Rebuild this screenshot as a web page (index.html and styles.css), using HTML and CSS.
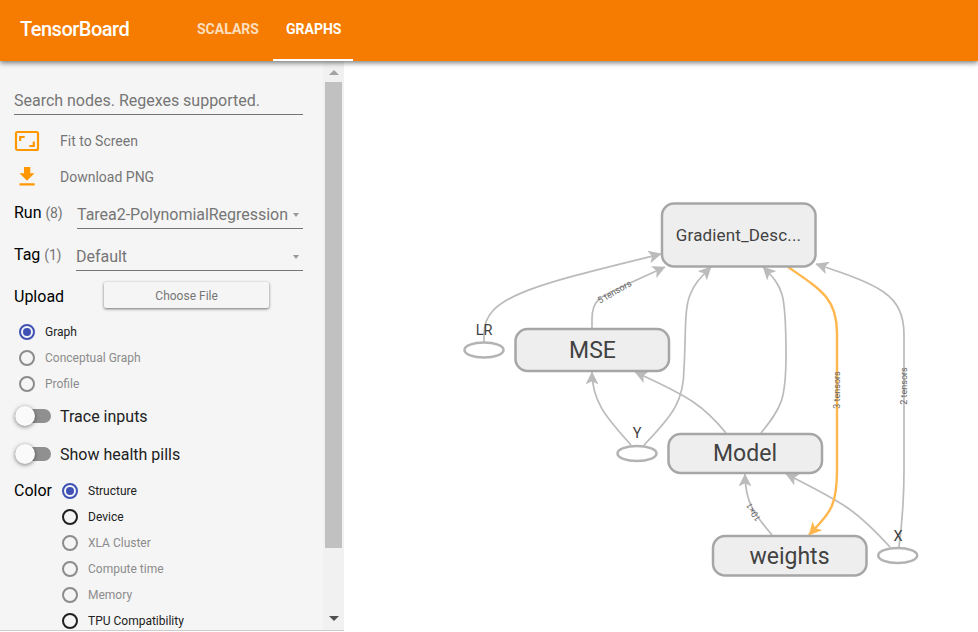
FILE: index.html
```html
<!DOCTYPE html>
<html lang="en">
<head>
<meta charset="utf-8">
<title>TensorBoard</title>
<link rel="stylesheet" href="styles.css">
</head>
<body>
<header class="toolbar">
  <div class="brand">TensorBoard</div>
  <nav class="tabs">
    <a class="tab">SCALARS</a>
    <a class="tab active">GRAPHS</a>
  </nav>
</header>
<main class="main">
  <aside class="side">
    <div class="controls">
      <div class="search">Search nodes. Regexes supported.</div>
      <div class="action">
        <svg class="icon" viewBox="0 0 26 26"><rect x="2" y="4" width="22" height="18" rx="1.500" fill="none" stroke="#ff9800" stroke-width="2.200"/><path d="M6.200 13V9h4.500M19.800 13.500v4.500h-4.500" fill="none" stroke="#ff9800" stroke-width="2.200"/></svg>
        <span>Fit to Screen</span>
      </div>
      <div class="action">
        <svg class="icon" viewBox="0 0 26 26"><path d="M10 3h6.300v6.200h4.200L13 16.700 5.500 9.200H10zM5.500 19.200h15.200v2.200H5.500z" fill="#ff9800"/></svg>
        <span>Download PNG</span>
      </div>
      <div class="row">
        <span class="label">Run <small>(8)</small></span>
        <div class="select run"><span>Tarea2-PolynomialRegression</span><i class="caret"></i></div>
      </div>
      <div class="row">
        <span class="label">Tag <small>(1)</small></span>
        <div class="select tag"><span>Default</span><i class="caret"></i></div>
      </div>
      <div class="upload"><span>Upload</span><button class="choose">Choose File</button></div>
      <div class="radios">
        <div class="radio checked"><i></i>Graph</div>
        <div class="radio disabled"><i></i>Conceptual Graph</div>
        <div class="radio disabled"><i></i>Profile</div>
      </div>
      <div class="toggle"><i class="switch"></i>Trace inputs</div>
      <div class="toggle"><i class="switch"></i>Show health pills</div>
      <div class="color">
        <span class="color-label">Color</span>
        <div>
          <div class="radio checked"><i></i>Structure</div>
          <div class="radio"><i></i>Device</div>
          <div class="radio disabled"><i></i>XLA Cluster</div>
          <div class="radio disabled"><i></i>Compute time</div>
          <div class="radio disabled"><i></i>Memory</div>
          <div class="radio"><i></i>TPU Compatibility</div>
        </div>
      </div>
    </div>
    <div class="scrollbar">
      <i class="up"></i>
      <div class="thumb"></div>
      <i class="down"></i>
    </div>
  </aside>
  <section class="canvas">
    <svg class="graph" viewBox="344 61 634 571">
      <defs>
        <marker id="arrow" viewBox="0 0 12 12" refX="11.500" refY="6" markerWidth="13" markerHeight="13" markerUnits="userSpaceOnUse" orient="auto"><path d="M0 0L12 6 0 12 3 6z" fill="#bbb"/></marker>
        <marker id="arrow-ref" viewBox="0 0 12 12" refX="11.500" refY="6" markerWidth="13" markerHeight="13" markerUnits="userSpaceOnUse" orient="auto"><path d="M0 0L12 6 0 12 3 6z" fill="#ffb74d"/></marker>
      </defs>
      <g class="edges">
        <path d="M484 342V334C484 297 530 286 661 254"/>
        <path d="M592 329V319C592 297 603 296 630 283L665 267"/>
        <path d="M631 445C610 421 592 404 592 372"/>
        <path d="M644 445C674 414 684 400 684 368C686 338 684 309 690 295C694 284 700 278 711 267"/>
        <path d="M726 433C704 406 690 397 635 372"/>
        <path d="M761 433C782 407 786 399 786 355C786 291 783 287 763 267"/>
        <path d="M772 535C755 515 745 503 745 474"/>
        <path d="M890 547C857 511 846 504 786 474"/>
        <path d="M899 547C903 516 904 500 904 470V335C904 294 879 285 816 264"/>
        <path class="reference" d="M788 267C820 289 837 298 837 333V470C837 510 828 514 809 535"/>
      </g>
      <g class="nodes">
        <rect x="662" y="203.500" width="153.500" height="63" rx="12"/>
        <rect x="515.500" y="329" width="153.500" height="42" rx="12"/>
        <rect x="668.500" y="434" width="153.500" height="39" rx="12"/>
        <rect x="713" y="536" width="153.500" height="39.500" rx="12"/>
        <ellipse cx="484" cy="350" rx="19.500" ry="7.500"/>
        <ellipse cx="637" cy="453.500" rx="19.500" ry="7.500"/>
        <ellipse cx="897.700" cy="555.500" rx="19.500" ry="7.500"/>
      </g>
      <g class="titles">
        <text class="desc" x="738.500" y="241">Gradient_Desc...</text>
        <text x="592.500" y="358">MSE</text>
        <text x="745" y="461">Model</text>
        <text x="789.500" y="564">weights</text>
        <text class="op" x="484" y="335">LR</text>
        <text class="op" x="637" y="438">Y</text>
        <text class="op" x="898" y="541">X</text>
      </g>
      <g class="edge-labels">
        <text transform="translate(616 294.500) rotate(-30)">5 tensors</text>
        <text transform="translate(840 390) rotate(-90)">3 tensors</text>
        <text transform="translate(907 386) rotate(-90)">2 tensors</text>
        <text transform="translate(756 510.500) rotate(-122)">10×1</text>
      </g>
    </svg>
  </section>
</main>
</body>
</html>
```

FILE: styles.css
```css
* { box-sizing: border-box; }
body { margin: 0; width: 978px; height: 632px; overflow: hidden; background: #fff; font-family: Roboto, sans-serif; color: #000; display: flex; flex-direction: column; }
.toolbar { position: relative; z-index: 1; height: 61px; flex: none; display: flex; background: #f57c00; color: #fff; box-shadow: 0 2px 5px rgba(0,0,0,.5); }
.brand { width: 185px; padding: 17px 0 0 20px; font-size: 20px; line-height: 24px; font-weight: 500; letter-spacing: -.5px; }
.tabs { display: flex; }
.tab { height: 61px; padding: 0 12px; display: flex; align-items: center; font-size: 14px; font-weight: 700; color: rgba(255,255,255,.75); padding-bottom: 3px; }
.tab:first-child { width: 88px; }
.tab.active { width: 80px; color: #fff; border-bottom: 2px solid #fff; padding-bottom: 1px; padding-left: 13px; }
.main { display: flex; flex: 1; min-height: 0; }
.side { width: 344px; height: 570px; display: flex; background: #f5f5f5; border-bottom: 1px solid #ccc; overflow: hidden; }
.controls { width: 323px; padding: 25px 20px 0 14px; flex: none; }
.search { height: 29px; width: 289px; line-height: 29px; font-size: 16px; letter-spacing: -.01px; color: #757575; border-bottom: 1px solid #757575; margin-bottom: 8px; }
.action { height: 36px; display: flex; align-items: center; gap: 20px; font-size: 14px; color: #757575; }
.icon { width: 26px; height: 26px; }
.row { height: 42px; display: flex; justify-content: space-between; font-size: 16px; }
.label { line-height: 35px; }
.label small { font-size: 14px; letter-spacing: -.2px; color: #757575; }
.select { width: 226px; height: 34px; border-bottom: 1px solid #757575; display: flex; align-items: center; justify-content: space-between; padding: 5px 4px 0 0; color: #757575; letter-spacing: -.03px; }
.select.tag { width: 227px; }
.caret { border: 3.500px solid transparent; border-top: 4px solid #999; border-bottom: 0; margin-top: 2px; }
.upload { height: 40px; display: flex; font-size: 16px; line-height: 36px; gap: 40px; }
.choose { width: 165px; height: 26px; margin-top: 3px; padding: 2px 0 0; border: 0; border-radius: 2px; background: #f5f5f5; box-shadow: 0 1px 3px rgba(0,0,0,.55); font: 12px Roboto, sans-serif; color: #757575; }
.radio { height: 26px; display: flex; align-items: center; gap: 10px; font-size: 12px; color: #212121; white-space: nowrap; }
.radios { padding-left: 5px; }
.radio i { width: 16px; height: 16px; border: 2px solid #212121; border-radius: 50%; display: flex; align-items: center; justify-content: center; }
.radio.disabled { color: #8c8c8c; }
.radio.disabled i { border-color: #8c8c8c; }
.radio.checked i { border-color: #3f51b5; }
.radio.checked i::after { content: ""; width: 8px; height: 8px; border-radius: 50%; background: #3f51b5; }
.toggle { height: 38px; display: flex; align-items: center; gap: 9px; font-size: 16px; color: #212121; }
.switch { width: 36px; height: 14px; margin-left: 1px; border-radius: 7px; display: flex; align-items: center; background: #909090; }
.switch::before { content: ""; width: 20px; height: 20px; flex: none; border-radius: 50%; background: #fafafa; box-shadow: 0 1px 4px rgba(0,0,0,.5); }
.color { display: flex; gap: 10px; padding-top: 5px; }
.color-label { width: 38px; font-size: 16px; line-height: 26px; }
.scrollbar { width: 21px; height: 569px; background: #f1f1f1; display: flex; flex-direction: column; align-items: center; flex: none; padding: 9px 0 9px; }
.up { border: 5px solid transparent; border-top: 0; border-bottom: 5px solid #a3a3a3; }
.down { border: 5px solid transparent; border-bottom: 0; border-top: 5px solid #505050; margin-top: auto; }
.thumb { width: 17px; height: 466px; margin-top: 7px; background: #c1c1c1; }
.canvas { flex: 1; }
.graph { display: block; width: 634px; height: 571px; }
.edges path { fill: none; stroke: #bbb; stroke-width: 1.700; marker-end: url(#arrow); }
.edges .reference { stroke: #ffb74d; stroke-width: 2.400; marker-end: url(#arrow-ref); }
.nodes rect { fill: #eee; stroke: #a6a6a6; stroke-width: 2.500; }
.nodes ellipse { fill: #fff; stroke: #b3b3b3; stroke-width: 2.500; }
.titles text { font-size: 23px; fill: #424242; text-anchor: middle; }
.titles .desc { font-size: 17px; letter-spacing: .15px; }
.titles .op { font-size: 14.500px; }
.edge-labels text { font-size: 9px; fill: #666; text-anchor: middle; }
```
